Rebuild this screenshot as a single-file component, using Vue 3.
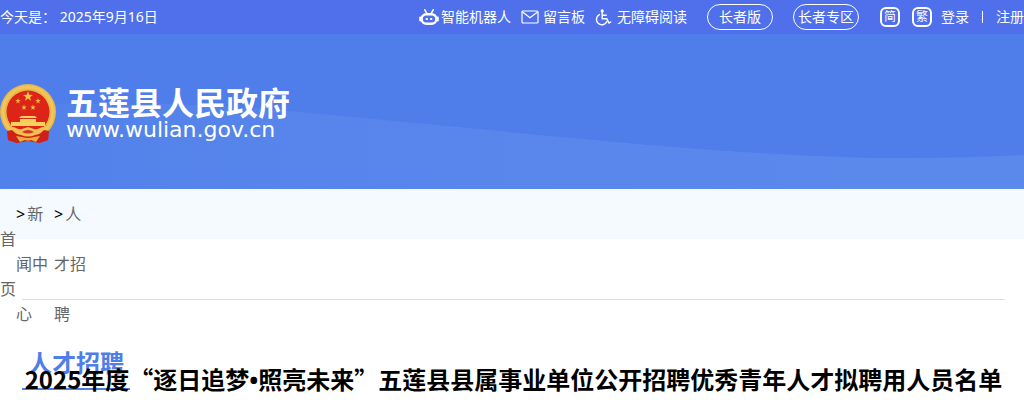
<template>
  <div class="page">
    <div class="topbar">
      <div class="date">今天是： {{ today }}</div>
      <nav class="tools">
        <a href="#" class="tool robot">
          <svg width="20" height="18" viewBox="0 0 20 18" fill="none" stroke="#fff" stroke-linecap="round">
            <path d="M5.8 1.8l1.7 3M14.2 1.8l-1.7 3" stroke-width="1.6" />
            <rect x="2.6" y="6.2" width="14.8" height="9.6" rx="4.8" stroke-width="2.4" />
            <path d="M1.2 9.5v3M18.8 9.5v3" stroke-width="2" />
            <path d="M7.5 11h.6M11.9 11h.6" stroke-width="1.8" />
          </svg>
          <span>智能机器人</span>
        </a>
        <a href="#" class="tool mail">
          <svg width="18" height="14" viewBox="0 0 18 14" fill="none" stroke="#fff" stroke-width="1.2">
            <rect x="1" y="1" width="16" height="12" rx="1" />
            <path d="M1.5 2L9 7.8L16.5 2" />
          </svg>
          <span>留言板</span>
        </a>
        <a href="#" class="tool access">
          <svg width="17" height="17" viewBox="0 0 17 17" fill="none" stroke="#fff" stroke-width="1.4" stroke-linecap="round">
            <circle cx="7.2" cy="1.9" r="1.6" fill="#fff" stroke="none" />
            <path d="M7.2 3.5v6.2h4.6l2.2 4.3 1.8-1M7.5 6.3h3.8" />
            <path d="M4.4 5.6a5.4 5.4 0 1 0 7.4 7" />
          </svg>
          <span>无障碍阅读</span>
        </a>
        <a href="#" class="pill">长者版</a>
        <a href="#" class="pill pill-zone">长者专区</a>
        <a href="#" class="lang">简</a>
        <a href="#" class="lang lang-tw">繁</a>
        <a href="#" class="login">登录</a>
        <span class="divider"></span>
        <a href="#">注册</a>
      </nav>
    </div>

    <header class="banner">
      <svg class="wave" viewBox="0 0 1024 155" preserveAspectRatio="none">
        <defs>
          <linearGradient id="waveFill" x1="0" x2="1" y1="0" y2="0">
            <stop offset="0" stop-color="#5181ea" />
            <stop offset="0.3" stop-color="#5785eb" />
            <stop offset="1" stop-color="#5b89eb" />
          </linearGradient>
        </defs>
        <path d="M0 72C150 67 220 71 300 78C520 98 740 124 900 124C950 124 990 123 1024 121V155H0Z" fill="url(#waveFill)" />
      </svg>
      <a href="#" class="brand">
        <svg width="56" height="60" viewBox="0 0 56 60">
          <path d="M7 40L8 56L17 59L28 57L39 59L48 56L49 40Z" fill="#d6231b" />
          <circle cx="28" cy="28" r="28" fill="#e8b748" />
          <circle cx="28" cy="28" r="25" fill="none" stroke="#f0c65c" stroke-width="3" />
          <circle cx="28" cy="28" r="21.5" fill="#dd2419" />
          <polygon :points="star(28, 12.5, 5.2)" fill="#f5c545" />
          <polygon v-for="(s, i) in smallStars" :key="i" :points="star(s[0], s[1], 3)" fill="#f0b840" />
          <path d="M21 32h14l2 2H19zM20 35h16v3H20zM11 38h34v4H11z" fill="#f7d15a" />
          <path d="M7 47l5-1 16 6 16-6 5 1-1 9-9 3-5-3q-6 2-12 0l-5 3-9-3z" fill="#cf2119" />
          <path d="M10 43l4 0q5 3 8 2l6-2 6 2q3 1 8-2l4 0q-4 7-11 8-7 3-14 0-7-1-11-8z" fill="#f0c050" />
          <path d="M22 48q6-4 12 0-6 3-12 0z" fill="#d6352a" />
          <path d="M16 52l6 1q6 2 12 0l6-1-4 6-5-2q-3 1-6 0l-5 2z" fill="#e9ae3a" />
        </svg>
        <span class="brand-text">
          <span class="brand-name">五莲县人民政府</span>
          <span class="brand-url">www.wulian.gov.cn</span>
        </span>
      </a>
    </header>

    <nav class="crumbs">
      <a href="#" class="crumb-home">首页</a>
      <div v-for="c in crumbs" :key="c" class="crumb">
        <span class="arrow">&gt;</span><a href="#">{{ c }}</a>
      </div>
    </nav>

    <main class="content">
      <div class="column-head">
        <h2 class="column-name">人才招聘</h2>
      </div>
      <h1 class="title">2025年度“逐日追梦<span class="dot">•</span>照亮未来”五莲县县属事业单位公开招聘优秀青年人才拟聘用人员名单</h1>
    </main>
  </div>
</template>

<script setup>
const today = '2025年9月16日'

const crumbs = ['新闻中心', '人才招聘']

const smallStars = [[18, 17], [38, 17], [24, 23.5], [33, 23.5]]

// five-pointed star as a polygon points string
function star(cx, cy, r) {
  const pts = []
  for (let i = 0; i < 10; i++) {
    const a = (Math.PI / 5) * i - Math.PI / 2
    const d = i % 2 ? r * 0.4 : r
    pts.push(`${(cx + d * Math.cos(a)).toFixed(2)},${(cy + d * Math.sin(a)).toFixed(2)}`)
  }
  return pts.join(' ')
}
</script>

<style>
body {
  margin: 0;
  background: #fff;
}
</style>

<style scoped>
.page {
  font-family: "Noto Sans", "Noto Sans CJK SC", sans-serif;
  font-size: 14px;
  color: #000;
}

a {
  color: inherit;
  text-decoration: none;
}

.topbar {
  display: flex;
  justify-content: space-between;
  height: 34px;
  line-height: 34px;
  background: #4f70ea;
  color: #fff;
  white-space: nowrap;
}

.tools {
  display: flex;
  align-items: center;
}

.tool {
  display: flex;
  align-items: center;
}

.robot {
  gap: 2px;
  margin-right: 10px;
}

.mail {
  gap: 4px;
  margin-right: 10px;
}

.access {
  gap: 5px;
  margin-right: 20px;
}

.pill {
  box-sizing: border-box;
  width: 66px;
  height: 26px;
  line-height: 24px;
  border: 1px solid #fff;
  border-radius: 13px;
  text-align: center;
  margin-right: 20px;
}

.pill-zone {
  margin-right: 21px;
}

.lang {
  box-sizing: border-box;
  width: 20px;
  height: 20px;
  line-height: 16px;
  border: 2px solid #fff;
  border-radius: 6px;
  font-size: 12px;
  text-align: center;
  margin-right: 12px;
}

.lang-tw {
  margin-right: 9px;
}

.divider {
  width: 1px;
  height: 12px;
  background: #fff;
  margin: 0 13px;
}

.banner {
  position: relative;
  display: flex;
  padding: 49px 0 44px;
  background: #4f7dea;
}

.wave {
  position: absolute;
  left: 0;
  top: 0;
  width: 100%;
  height: 100%;
}

.brand {
  position: relative;
  display: flex;
  align-items: center;
  gap: 10px;
  height: 62px;
  color: #fff;
}

.brand-text {
  display: flex;
  flex-direction: column;
}

.brand-name {
  font-size: 32px;
  line-height: 32px;
  font-weight: 700;
}

.brand-url {
  font-family: "DejaVu Sans", sans-serif;
  font-size: 22px;
  line-height: 22px;
}

.crumbs {
  display: flex;
  align-items: flex-start;
  height: 50px;
  line-height: 50px;
  font-size: 16px;
  background: #f4faff;
}

.crumbs a {
  color: #666;
}

.crumb-home {
  width: 16px;
  margin-top: 25px;
}

.crumb {
  width: 32px;
  margin-right: 6px;
  word-break: break-all;
}

.arrow {
  padding-right: 2px;
}

.content {
  padding: 60px 19px 0 22px;
}

.column-head {
  border-top: 1px solid #ddd;
  padding-top: 38px;
}

.column-name {
  display: inline-block;
  margin: 0;
  padding: 0 6px;
  font-size: 24px;
  line-height: 50px;
  font-weight: 700;
  color: #4f7dea;
  border-bottom: 2px solid #4f7dea;
}

/* the article heading runs up over the column name */
.title {
  position: relative;
  margin: -35px 0 0;
  font-size: 24px;
  line-height: 48px;
  font-weight: 700;
  text-align: center;
  white-space: nowrap;
  font-family: "Noto Sans CJK SC", sans-serif;
}

.dot {
  font-family: "Noto Sans", sans-serif;
}
</style>
